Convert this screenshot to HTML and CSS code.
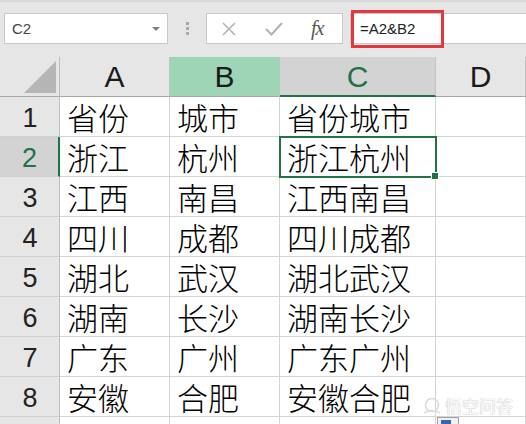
FILE: index.html
```html
<!DOCTYPE html>
<html lang="zh-CN">
<head>
<meta charset="utf-8">
<title>Excel</title>
<link rel="stylesheet" href="styles.css">
</head>
<body>
<div class="app">
  <div class="toolbar">
    <div class="namebox">
      <span class="name">C2</span>
      <span class="caret"></span>
    </div>
    <div class="sep"><i></i><i></i><i></i></div>
    <div class="btnbox">
      <svg class="ico" width="18" height="14" viewBox="0 0 18 14"><path d="M3 1 L15 13 M15 1 L3 13" stroke="#b3b3b3" stroke-width="1.6" fill="none"/></svg>
      <svg class="ico" width="20" height="16" viewBox="0 0 20 16"><path d="M2 8 L7.5 13.5 L18 2" stroke="#b3b3b3" stroke-width="2" fill="none"/></svg>
      <span class="fx">fx</span>
    </div>
    <div class="formula">
      <span class="ftext">=A2&amp;B2</span>
      <span class="redbox"></span>
    </div>
  </div>
  <div class="sheet">
    <div class="corner"><span class="tri"></span></div>
    <div class="ch">A</div>
    <div class="ch hov">B</div>
    <div class="ch act">C</div>
    <div class="ch">D</div>

    <div class="rh">1</div><div class="c">省份</div><div class="c">城市</div><div class="c">省份城市</div><div class="c"></div>
    <div class="rh act">2</div><div class="c">浙江</div><div class="c">杭州</div><div class="c sel">浙江杭州<span class="handle"></span></div><div class="c"></div>
    <div class="rh">3</div><div class="c">江西</div><div class="c">南昌</div><div class="c">江西南昌</div><div class="c"></div>
    <div class="rh">4</div><div class="c">四川</div><div class="c">成都</div><div class="c">四川成都</div><div class="c"></div>
    <div class="rh">5</div><div class="c">湖北</div><div class="c">武汉</div><div class="c">湖北武汉</div><div class="c"></div>
    <div class="rh">6</div><div class="c">湖南</div><div class="c">长沙</div><div class="c">湖南长沙</div><div class="c"></div>
    <div class="rh">7</div><div class="c">广东</div><div class="c">广州</div><div class="c">广东广州</div><div class="c"></div>
    <div class="rh">8</div><div class="c">安徽</div><div class="c">合肥</div><div class="c">安徽合肥</div><div class="c"></div>
    <div class="rh"></div><div class="c"></div><div class="c"></div><div class="c"></div><div class="c"></div>
  </div>
  <div class="watermark">
    <svg width="18" height="16" viewBox="0 0 18 16"><circle cx="9" cy="7" r="6.5" fill="none" stroke="#dcdcdc" stroke-width="1.6"/><path d="M1 15 Q9 10 17 15" stroke="#dcdcdc" stroke-width="1.6" fill="none"/></svg>
    <span>悟空问答</span>
  </div>
  <div class="paste"><span></span></div>
</div>
</body>
</html>
```
FILE: styles.css
```css
html, body {
  margin: 0;
  padding: 0;
  background: #ffffff;
}
.app {
  position: relative;
  width: 526px;
  height: 424px;
  overflow: hidden;
}
.toolbar {
  height: 57px;
  box-sizing: border-box;
  background: #e6e6e6;
  border-top: 2px solid #d9d9d9;
  padding: 11px 0 0 4px;
  display: flex;
  align-items: flex-start;
  font-family: "Liberation Sans", Arial, sans-serif;
}
.namebox {
  width: 164px;
  height: 31px;
  box-sizing: border-box;
  background: #fff;
  border: 1px solid #c8c8c8;
  display: flex;
  align-items: center;
  justify-content: space-between;
  padding: 0 7px 0 7px;
}
.name {
  font-size: 15px;
  color: #444;
}
.caret {
  width: 0;
  height: 0;
  border-left: 4px solid transparent;
  border-right: 4px solid transparent;
  border-top: 4px solid #808080;
}
.sep {
  width: 38px;
  height: 31px;
  display: flex;
  flex-direction: column;
  align-items: center;
  justify-content: center;
  gap: 2px;
}
.sep i {
  display: block;
  width: 3px;
  height: 3px;
  background: #a8a8a8;
}
.btnbox {
  width: 137px;
  height: 31px;
  box-sizing: border-box;
  background: #fff;
  border: 1px solid #c8c8c8;
  display: flex;
  align-items: center;
  padding-left: 13px;
}
.ico {
  display: block;
  margin-right: 26px;
}
.ico + .ico {
  margin-right: 27px;
}
.fx {
  font-family: "Liberation Serif", "Times New Roman", serif;
  font-style: italic;
  font-size: 20px;
  color: #555;
  letter-spacing: -1px;
}
.formula {
  position: relative;
  flex: 1;
  margin-left: 7px;
  height: 31px;
  box-sizing: border-box;
  background: #fff;
  border: 1px solid #c8c8c8;
  border-right: none;
  display: flex;
  align-items: center;
  padding-left: 9px;
}
.ftext {
  font-size: 15px;
  color: #222;
}
.redbox {
  position: absolute;
  left: 0;
  top: -4px;
  width: 93px;
  height: 38px;
  box-sizing: border-box;
  border: 3px solid #e2373d;
}
.sheet {
  display: grid;
  grid-template-columns: 60px 110px 110px 156px 1fr;
  grid-template-rows: 40px repeat(9, 40px);
}
.corner {
  position: relative;
  background: #e6e6e6;
  border-right: 1px solid #bdbdbd;
  border-bottom: 1px solid #a6a6a6;
  box-sizing: border-box;
}
.tri {
  position: absolute;
  right: 3px;
  bottom: 3px;
  width: 0;
  height: 0;
  border-left: 32px solid transparent;
  border-bottom: 32px solid #b5b5b5;
}
.ch {
  background: #e6e6e6;
  border-right: 1px solid #c3c3c3;
  border-bottom: 1px solid #a6a6a6;
  box-sizing: border-box;
  font-family: "Liberation Sans", Arial, sans-serif;
  font-size: 30px;
  color: #1a1a1a;
  text-align: center;
  line-height: 40px;
}
.ch.hov {
  background: #9fd5b7;
  border-right-color: #9fd5b7;
}
.ch.act {
  background: #d3d3d3;
  color: #217346;
  border-bottom: 2px solid #217346;
  line-height: 39px;
}
.rh {
  background: #e6e6e6;
  border-right: 1px solid #bdbdbd;
  border-bottom: 1px solid #d0d0d0;
  box-sizing: border-box;
  font-family: "Liberation Sans", Arial, sans-serif;
  font-size: 27px;
  color: #222;
  text-align: center;
  line-height: 42px;
  padding-left: 1px;
}
.rh.act {
  background: #d3d3d3;
  color: #217346;
  border-right: 2px solid #217346;
}
.c {
  position: relative;
  border-right: 1px solid #d4d4d4;
  border-bottom: 1px solid #d4d4d4;
  box-sizing: border-box;
  font-family: "Liberation Sans", "Noto Sans CJK SC", "Noto Sans CJK JP", sans-serif;
  font-weight: 300;
  font-size: 31px;
  color: #000;
  padding: 6px 0 0 7px;
  line-height: 34px;
  white-space: nowrap;
}
.c.sel {
  outline: 2px solid #217346;
  outline-offset: -1px;
  z-index: 1;
}
.handle {
  position: absolute;
  right: -4px;
  bottom: -4px;
  width: 6px;
  height: 6px;
  background: #217346;
  border: 1px solid #fff;
}
.watermark {
  position: absolute;
  left: 423px;
  top: 393px;
  display: flex;
  align-items: center;
  gap: 4px;
  font-family: "Noto Sans CJK SC", sans-serif;
  font-size: 17px;
  color: #fafafa;
  text-shadow: 0 0 1px #c4c4c4, 0 0 1px #c4c4c4;
}
.paste {
  position: absolute;
  left: 437px;
  top: 417px;
  width: 22px;
  height: 14px;
  box-sizing: border-box;
  background: #f2f2f2;
  border: 1px solid #a0a0a0;
  padding: 2px 0 0 3px;
}
.paste span {
  display: block;
  width: 10px;
  height: 8px;
  background: #2e66b8;
}
```
